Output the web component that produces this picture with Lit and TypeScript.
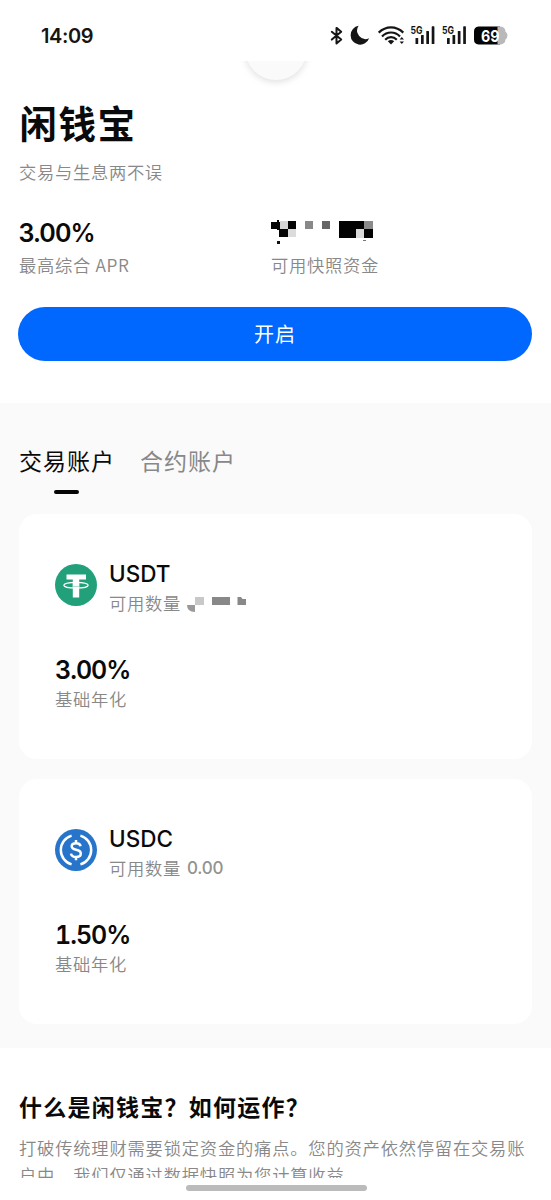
import { LitElement, html, css, svg } from "lit";
import { customElement, property } from "lit/decorators.js";

/* [x, y, width, height, fill] */
type Block = [number, number, number, number, string];

const mosaic = (w: number, h: number, blocks: Block[]) => html`
  <svg width=${w} height=${h} viewBox="0 0 ${w} ${h}" shape-rendering="crispEdges">
    ${blocks.map(([x, y, bw, bh, fill]) => svg`<rect x=${x} y=${y} width=${bw} height=${bh} fill=${fill}></rect>`)}
  </svg>`;

const FUNDS: Block[] = [
  [0, 2, 9, 7, "#050505"], [6, 0, 2, 10, "#050505"], [9, 1, 8, 8, "#d6d6d6"], [17, 1, 8, 8, "#050505"],
  [8, 9, 9, 8, "#050505"], [17, 9, 8, 8, "#dcdcdc"], [6, 21, 3, 3, "#111"],
  [34, 1, 8, 8, "#888"], [51, 1, 8, 8, "#666"],
  [68, 1, 25, 17, "#020202"], [93, 1, 9, 8, "#8a8a8a"], [85, 9, 8, 9, "#d9d9d9"], [93, 9, 9, 9, "#020202"],
  [92, 20, 3, 1, "#777"],
];

const usdtIcon = svg`
  <circle cx="21" cy="21" r="21" fill="#22a079"></circle>
  <path d="M11.5 10.5H31V15.6H24.2V33.5H17.8V15.6H11.5Z" fill="#fff"></path>
  <ellipse cx="21" cy="21.3" rx="12.2" ry="2.9" fill="none" stroke="#fff" stroke-width="1.2"></ellipse>
  <path d="M17.8 18V22.6H24.2V18Z" fill="#fff"></path>
  <path d="M17.5 22.3Q21 22.7 24.5 22.3" fill="none" stroke="#8fcdb9" stroke-width=".7"></path>`;

const usdcIcon = svg`
  <circle cx="21" cy="21" r="21" fill="#2775ca"></circle>
  <g fill="none" stroke="#fff" stroke-width="2.5">
    <path d="M16.6 6.6A15 15 0 0 0 16.6 35.4"></path>
    <path d="M25.4 6.6A15 15 0 0 1 25.4 35.4"></path>
    <path d="M25.6 17.2C25.2 15 23.6 14.2 21.1 14.2C18.5 14.2 16.7 15.3 16.7 17.3C16.7 19.5 18.4 20.2 21.1 20.8C24 21.4 25.8 22.2 25.8 24.5C25.8 26.7 24 28 21.1 28C18.2 28 16.4 26.800 16 24.6M21 11V14.2M21 28V31.2"></path>
  </g>`;

@customElement("status-bar")
class StatusBar extends LitElement {
  static styles = css`
    :host {
      display: flex; justify-content: space-between; align-items: center; box-sizing: border-box;
      height: 61px; padding: 10px 42px 0 41px; background: #fff;
    }
    .time { font: 600 20px/24px Inter, sans-serif; color: #151515; letter-spacing: -0.4px; }
    svg { display: block; }
    text { font-family: Inter, "Liberation Sans", sans-serif; font-weight: 700; }
  `;
  private bars(x: number) {
    return svg`<g transform="translate(${x} 0)" fill="#151515">
      <text x="0" y="8.5" font-size="10.5" textLength="12" lengthAdjust="spacingAndGlyphs">5G</text>
      <rect x="5" y="13" width="2.7" height="6" rx=".6"></rect><rect x="10.5" y="10" width="2.7" height="9" rx=".6"></rect>
      <rect x="15.8" y="6" width="2.7" height="13" rx=".6"></rect><rect x="21.2" y="1.3" width="2.7" height="17.7" rx=".6"></rect>
    </g>`;
  }
  render() {
    return html`
      <span class="time">14:09</span>
      <svg width="180" height="22" viewBox="0 0 180 22">
        <path d="M2.8 6.8L12.2 14.6L7.5 18.5V2.9L12.2 6.7L2.8 14.6" fill="none" stroke="#151515" stroke-width="2" stroke-linejoin="round" stroke-linecap="round"></path>
        <path d="M29.6 1.3A9.5 9.5 0 1 0 40.1 13.8A8.5 8.5 0 0 1 29.6 1.3Z" fill="#151515" transform="translate(0 -.5)"></path>
        <g transform="translate(-1 0)">
          <g fill="none" stroke="#151515" stroke-width="2.2">
            <path d="M50.7 7.6C58 0.6 68 0.6 75.3 7.6"></path>
            <path d="M54 11.4C59 6.2 67 6.2 72 11.4"></path>
            <path d="M57.2 14.7C60.5 11.2 65.5 11.2 68.8 14.7"></path>
          </g>
          <path d="M59.8 16.2Q63 13.8 66.2 16.2L63 19.5Z" fill="#151515"></path>
          <path d="M71.6 14.6L73.8 12L76 14.6ZM71.6 16.4L73.8 19L76 16.4Z" fill="#151515"></path>
        </g>
        ${this.bars(81.5)}${this.bars(113)}
        <path d="M150 2H171.5V20H150A5 5 0 0 1 145.5 15V7A5 5 0 0 1 150 2Z" fill="#050505" transform="translate(-.5 -.5)"></path>
        <path d="M168.5 1.5H171.5A5.5 5.5 0 0 1 176.5 6.7Q178.5 8 178.5 10.5T176.5 14.5A5.5 5.5 0 0 1 171.5 19.5H168.5Z" fill="#b9b9b9"></path>
        <text x="152" y="16.5" font-size="16" fill="#fff" textLength="18.5" lengthAdjust="spacingAndGlyphs">69</text>
      </svg>`;
  }
}

@customElement("asset-card")
class AssetCard extends LitElement {
  @property() symbol = "";
  @property() amount = "";
  @property() rate = "";
  static styles = css`
    :host { display: block; box-sizing: border-box; height: 245px; padding: 46px 36px 0; background: #fff; border-radius: 18px; }
    .head { display: flex; gap: 12px; }
    .icon { display: block; margin-top: 4px; flex: none; }
    .name { font: 500 22.5px/28px Inter, sans-serif; color: #0a0a0a; }
    .sub { display: flex; align-items: center; height: 26px; margin-top: 2px; }
    .label { font: 350 17.3px/26px "Noto Sans CJK SC", sans-serif; letter-spacing: 0.7px; color: #888; white-space: pre; }
    .amount { font: 500 17px/26px Inter, sans-serif; color: #929292; margin-left: 6px; letter-spacing: -0.2px; }
    .rate { margin-top: 38px; font: 600 25px/32px Inter, sans-serif; letter-spacing: -1px; color: #0a0a0a; font-variant-numeric: tabular-nums; }
    .mask { display: block; margin: 2px 0 0 6px; }
  `;
  render() {
    return html`
      <div class="head">
        <svg class="icon" width="42" height="42" viewBox="0 0 42 42">${this.symbol === "USDT" ? usdtIcon : usdcIcon}</svg>
        <div>
          <div class="name">${this.symbol}</div>
          <div class="sub">
            <span class="label">可用数量</span>
            ${this.amount
              ? html`<span class="amount">${this.amount}</span>`
              : html`<svg class="mask" width="60" height="16" viewBox="0 0 60 16">
                  <path d="M0 9H8V16Q0 16 0 9Z" fill="#999"></path>
                  <path d="M8 1H17V9H8Z" fill="#c8c8c8"></path>
                  <path d="M25 1H43V9H25Z" fill="#888"></path>
                  <path d="M50.5 1H54L55.5 3H59V9H50.5Z" fill="#888"></path>
                </svg>`}
          </div>
        </div>
      </div>
      <div class="rate">${this.rate}</div>
      <div class="label">基础年化</div>`;
  }
}

@customElement("app-root")
class AppRoot extends LitElement {
  static styles = css`
    :host {
      display: flex; flex-direction: column; height: 1200px; overflow: hidden; position: relative;
      background: #fff; color: #0a0a0a; font-family: "Noto Sans CJK SC", sans-serif;
    }
    .page { flex: 1; min-height: 0; overflow: hidden; position: relative; }
    .loader {
      position: absolute; top: -43px; left: 244.5px; width: 62px; height: 62px; border-radius: 50%;
      background: #fafafa; box-shadow: 0 2px 7px rgba(0, 0, 0, 0.13);
    }
    .hero { box-sizing: border-box; height: 342px; padding: 33px 19px 0; }
    h1 { margin: 0; font-size: 37.5px; line-height: 56px; font-weight: 700; letter-spacing: 1.5px; text-indent: 0.5px; }
    .note { font-size: 17.3px; line-height: 26px; font-weight: 350; letter-spacing: 0.7px; color: #888; }
    .slogan { margin-top: 9px; }
    .stats { display: grid; grid-template-columns: 252px 1fr; margin-top: 31px; }
    .value { height: 32px; padding: 1px 0 3px; font: 600 25px/32px Inter, sans-serif; letter-spacing: -0.9px; text-indent: -0.5px; }
    .value svg { display: block; padding-top: 3px; }
    button {
      display: block; width: 514px; height: 54px; margin: 29px 0 0 -1px; border: 0; border-radius: 27px; padding: 0;
      background: #0068ff; color: #fff; font: 400 20px/54px "Noto Sans CJK SC", sans-serif; letter-spacing: 1px;
    }
    .accounts { box-sizing: border-box; height: 645px; background: #fafafa; padding: 39px 19px 0; }
    .tabs { display: flex; gap: 25px; height: 72px; }
    .tab { font-size: 23px; line-height: 36px; letter-spacing: 1px; color: #888; }
    .active { color: #0a0a0a; }
    .active::after { content: ""; display: block; width: 25px; height: 4px; margin: 12px 0 0 35px; border-radius: 2px; background: #050505; }
    .cards { display: grid; gap: 20px; }
    .about { padding: 40px 19px 0; }
    h2 { margin: 0; font-size: 23px; line-height: 36px; font-weight: 700; letter-spacing: 1.25px; }
    .copy { margin: 10px -10px 0 0; line-height: 27px; white-space: pre; letter-spacing: 0.8px; }
    .dock { height: 22px; background: #fff; display: flex; justify-content: center; }
    .grip { width: 181px; height: 6px; margin: 7px 0 0 2px; border-radius: 3px; background: #bbb; }
  `;
  render() {
    return html`
      <status-bar></status-bar>
      <div class="page">
        <div class="loader"></div>
        <section class="hero">
          <h1>闲钱宝</h1>
          <div class="note slogan">交易与生息两不误</div>
          <div class="stats">
            <div><div class="value">3.00%</div><div class="note">最高综合 APR</div></div>
            <div><div class="value">${mosaic(104, 28, FUNDS)}</div><div class="note">可用快照资金</div></div>
          </div>
          <button>开启</button>
        </section>
        <section class="accounts">
          <div class="tabs"><div class="tab active">交易账户</div><div class="tab">合约账户</div></div>
          <div class="cards">
            <asset-card symbol="USDT" rate="3.00%"></asset-card>
            <asset-card symbol="USDC" amount="0.00" rate="1.50%"></asset-card>
          </div>
        </section>
        <section class="about">
          <h2>什么是闲钱宝？如何运作？</h2>
          <div class="note copy">打破传统理财需要锁定资金的痛点。您的资产依然停留在交易账
户中，我们仅通过数据快照为您计算收益</div>
        </section>
      </div>
      <div class="dock"><div class="grip"></div></div>`;
  }
}
